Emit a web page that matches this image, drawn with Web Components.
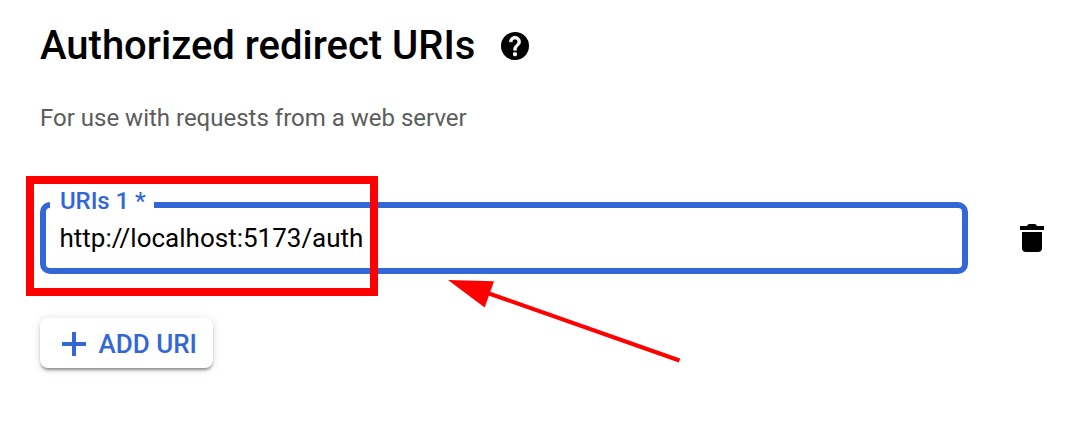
<!DOCTYPE html>
<html lang="en">
<head>
<meta charset="utf-8">
<title>Authorized redirect URIs</title>
<style>
body { margin: 0; background: #fff; font-family: Roboto, "Liberation Sans", sans-serif; }
</style>
</head>
<body>
<redirect-page></redirect-page>
<script>
const define = (name, html) => customElements.define(name, class extends HTMLElement {
  constructor() {
    super();
    const t = document.createElement('template');
    t.innerHTML = html;
    this.attachShadow({ mode: 'open' }).append(t.content.cloneNode(true));
  }
});

define('help-icon', `
<style>:host{display:block;width:28px;height:28px} svg{display:block}</style>
<svg width="28" height="28" viewBox="2 2 20 20"><circle cx="12" cy="12" r="10"/>
<path fill="#fff" stroke="#fff" stroke-width=".45" d="M15.07 11.25l-.9.92C13.45 12.9 13 13.5 13 15h-2v-.5c0-1.1.45-2.1 1.17-2.83l1.24-1.26c.37-.36.59-.86.59-1.41 0-1.1-.9-2-2-2s-2 .9-2 2H8c0-2.21 1.79-4 4-4s4 1.79 4 4c0 .88-.36 1.68-.93 2.25z"/>
<rect x="10.6" y="16.5" width="2.8" height="2.8" rx="1" fill="#fff"/></svg>`);

define('delete-icon', `
<style>:host{display:block;width:24px;height:28px} svg{display:block}</style>
<svg width="24" height="28" viewBox="0 0 24 28"><path d="M0 2H7Q7.6 0 9.5 0H14.5Q16.4 0 17 2H24V6H0ZM2 8H22V24Q22 28 18 28H6Q2 28 2 24Z"/></svg>`);

define('section-heading', `
<style>
:host{display:block}
.row{display:flex;align-items:center;gap:26px;height:48px}
h1{margin:0;font-size:40px;line-height:48px;font-weight:500;white-space:nowrap;width:435px}
p{margin:32px 0 0;font-size:24px;line-height:32px;color:#5c5c5c;white-space:nowrap}
</style>
<div class="row"><h1><slot></slot></h1><help-icon></help-icon></div>
<p><slot name="description"></slot></p>`);

define('outlined-field', `
<style>
:host{display:block;width:928px;height:72px;position:relative;color:#000}
.box{box-sizing:border-box;height:72px;border:6px solid #3367d6;border-radius:10px;padding:14px 13.5px 0;font-size:26px;line-height:32px;white-space:nowrap}
.label{position:absolute;left:10px;top:-14px;box-sizing:border-box;width:104px;height:26px;padding-left:10px;background:#fff;color:#3367d6;font-size:24px;line-height:26px;font-weight:500;letter-spacing:-.08px;white-space:nowrap}
</style>
<div class="box"><slot></slot></div><div class="label"><slot name="label"></slot></div>`);

define('add-button', `
<style>
:host{display:block;width:173px}
button{box-sizing:border-box;width:173px;height:50px;display:flex;align-items:center;gap:12.5px;border:0;border-radius:8px;padding:1px 0 0 22px;background:#fff;color:#3367d6;font:500 26px/32px Roboto,"Liberation Sans",sans-serif;white-space:nowrap;box-shadow:0 3px 3px -1px rgba(0,0,0,.4),0 1px 9px rgba(0,0,0,.14)}
svg{display:block;flex:none}
</style>
<button><svg width="24" height="24" viewBox="0 0 24 24"><path d="M10 0h4v10h10v4H14v10h-4V14H0v-4h10Z" fill="#3367d6"/></svg><slot></slot></button>`);

define('callout-overlay', `
<style>:host{position:absolute;inset:0;pointer-events:none} svg{display:block}</style>
<svg width="1080" height="422" viewBox="0 0 1080 422"><rect x="30" y="180" width="344" height="112" fill="none" stroke="#f00" stroke-width="8"/>
<path d="M489 293.5 679.5 360.5" stroke="#f00" stroke-width="4"/><path d="M448 280 494 281.2 484.7 307.5Z" fill="#f00"/></svg>`);

define('redirect-page', `
<style>
:host{display:block;position:relative;box-sizing:border-box;width:1080px;height:422px;padding:22px 36px 0 40px;overflow:hidden}
.row{display:flex;align-items:center;justify-content:space-between;margin-top:68px}
add-button{margin-top:44px}
</style>
<section-heading>Authorized redirect URIs<span slot="description">For use with requests from a web server</span></section-heading>
<div class="row"><outlined-field>http://localhost:5173/auth<span slot="label">URIs 1 *</span></outlined-field><delete-icon></delete-icon></div>
<add-button>ADD URI</add-button>
<callout-overlay></callout-overlay>`);
</script>
</body>
</html>
